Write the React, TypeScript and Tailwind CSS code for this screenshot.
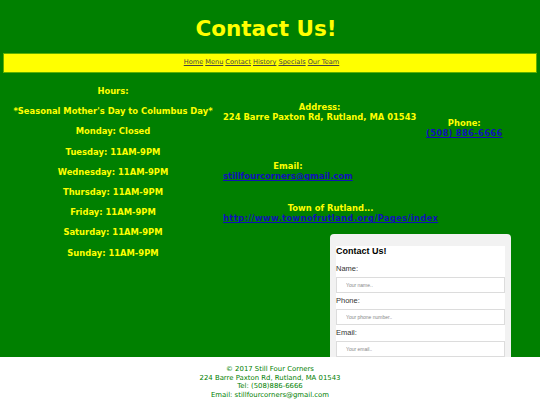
import React from "react";

const hours = [
    "Hours:",
    "*Seasonal Mother's Day to Columbus Day*",
    "Monday: Closed",
    "Tuesday: 11AM-9PM",
    "Wednesday: 11AM-9PM",
    "Thursday: 11AM-9PM",
    "Friday: 11AM-9PM",
    "Saturday: 11AM-9PM",
    "Sunday: 11AM-9PM",
];

const links = ["Home", "Menu", "Contact", "History", "Specials", "Our Team"];

function Field({ label, placeholder }: { label: string; placeholder: string }) {
    return (
        <div className="flex flex-col">
            <label className="mt-[3px] text-[7.5px] leading-[10px] text-[#333]">{label}</label>
            <input
                type="text"
                placeholder={placeholder}
                className="mt-[3px] h-[16px] w-full border border-[#dcdcdc] bg-white pl-[9px] text-[5px] placeholder:text-[#888] outline-none"
            />
        </div>
    );
}

export default function App() {
    return (
        <div className="w-[540px] h-[405px] overflow-hidden font-['DejaVu_Sans',Verdana,sans-serif]">
            <div className="h-[357px] overflow-hidden bg-[#008000]">
                <h1 className="pt-[16px] pr-[8px] text-center text-[21.5px] leading-[25px] font-bold text-[#ffff00]">Contact Us!</h1>

                <nav className="mx-[3px] mt-[12px] flex h-[20px] items-center justify-center gap-[2px] border border-[#5fb000] bg-[#ffff00] pr-[17px] text-[6.6px]">
                    {links.map((l) => (
                        <a key={l} href="#" className="text-[#444] underline">{l}</a>
                    ))}
                </nav>

                <div className="flex">
                    <div className="w-[223px] pl-[3px] pt-[13px] flex flex-col gap-[10.2px] text-center text-[8.4px] leading-[10px] font-bold text-[#ffff00]">
                        {hours.map((h) => (
                            <p key={h}>{h}</p>
                        ))}
                    </div>

                    <div className="flex-1 flex flex-col">
                        <div className="flex text-[8.4px] leading-[10.3px] font-bold">
                            <div className="w-[203px] pt-[29px] flex flex-col items-start">
                                <div className="text-center text-[#ffff00]">
                                    <p>Address:</p>
                                    <p>224 Barre Paxton Rd, Rutland, MA 01543</p>
                                </div>
                                <div className="mt-[38.4px] text-center">
                                    <p className="text-[#ffff00]">Email:</p>
                                    <a href="#" className="text-[#1010b8] underline">stillfourcorners@gmail.com</a>
                                </div>
                                <div className="mt-[21.4px] text-center">
                                    <p className="text-[#ffff00]">Town of Rutland...</p>
                                    <a href="#" className="tracking-[0.33px] text-[#1010b8] underline">http://www.townofrutland.org/Pages/index</a>
                                </div>
                            </div>
                            <div className="pt-[45px]">
                                <div className="text-center">
                                    <p className="text-[#ffff00]">Phone:</p>
                                    <a href="#" className="tracking-[0.3px] text-[#1010b8] underline">(508) 886-6666</a>
                                </div>
                            </div>
                        </div>

                        <div className="ml-[107px] mt-[10.4px] w-[181px] rounded-t-[4px] bg-[#f2f2f2] px-[6px] pt-[12.5px] font-['Liberation_Sans',Arial,sans-serif]">
                            <form className="bg-white pb-[10px]">
                                <h2 className="text-[9px] leading-[11px] font-bold text-black">Contact Us!</h2>
                                <div className="mt-[4px] flex flex-col">
                                    <Field label="Name:" placeholder="Your name.." />
                                    <Field label="Phone:" placeholder="Your phone number.." />
                                    <Field label="Email:" placeholder="Your email.." />
                                </div>
                            </form>
                        </div>
                    </div>
                </div>
            </div>

            <footer className="h-[48px] bg-white pt-[8px] text-center text-[6.9px] leading-[8.7px] text-[#008000]">
                <p>© 2017 Still Four Corners</p>
                <p>224 Barre Paxton Rd, Rutland, MA 01543</p>
                <p>Tel: (508)886-6666</p>
                <p>Email: stillfourcorners@gmail.com</p>
            </footer>
        </div>
    );
}
